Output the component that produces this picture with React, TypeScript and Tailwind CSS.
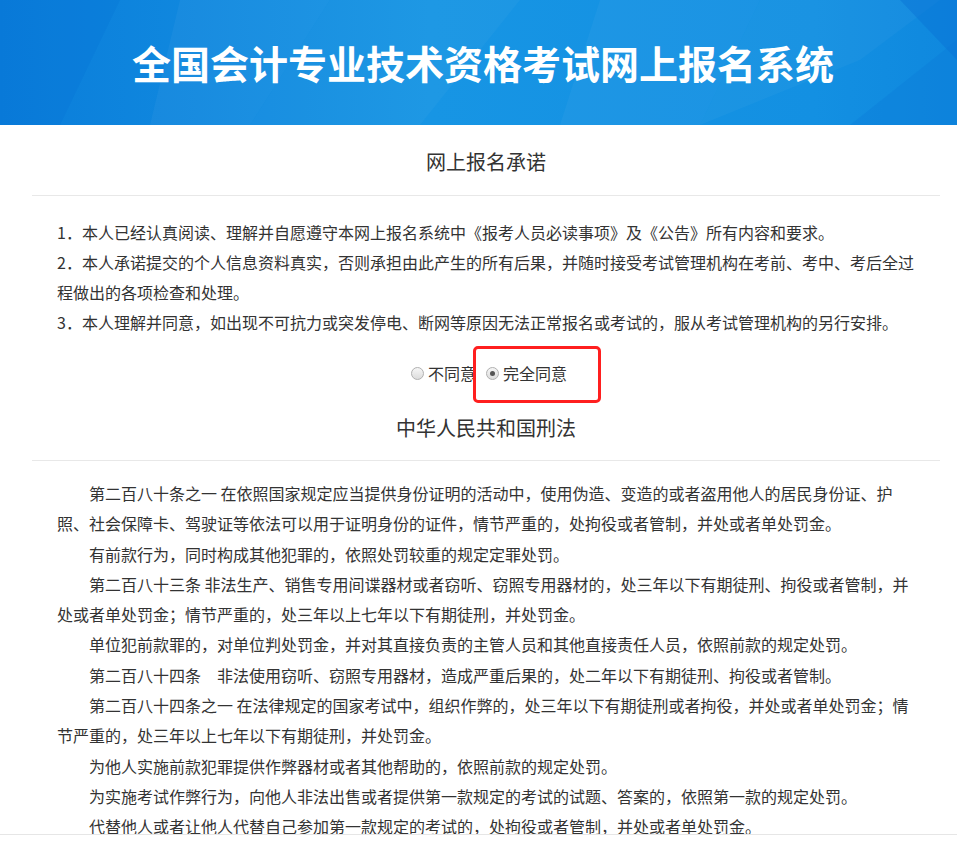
import React from "react";

const cjk = "font-['Microsoft_YaHei','Noto_Sans_CJK_SC',sans-serif]";

const promises = [
  "1．本人已经认真阅读、理解并自愿遵守本网上报名系统中《报考人员必读事项》及《公告》所有内容和要求。",
  "2．本人承诺提交的个人信息资料真实，否则承担由此产生的所有后果，并随时接受考试管理机构在考前、考中、考后全过程做出的各项检查和处理。",
  "3．本人理解并同意，如出现不可抗力或突发停电、断网等原因无法正常报名或考试的，服从考试管理机构的另行安排。",
];

const articles = [
  "第二百八十条之一 在依照国家规定应当提供身份证明的活动中，使用伪造、变造的或者盗用他人的居民身份证、护照、社会保障卡、驾驶证等依法可以用于证明身份的证件，情节严重的，处拘役或者管制，并处或者单处罚金。",
  "有前款行为，同时构成其他犯罪的，依照处罚较重的规定定罪处罚。",
  "第二百八十三条 非法生产、销售专用间谍器材或者窃听、窃照专用器材的，处三年以下有期徒刑、拘役或者管制，并处或者单处罚金；情节严重的，处三年以上七年以下有期徒刑，并处罚金。",
  "单位犯前款罪的，对单位判处罚金，并对其直接负责的主管人员和其他直接责任人员，依照前款的规定处罚。",
  "第二百八十四条　非法使用窃听、窃照专用器材，造成严重后果的，处二年以下有期徒刑、拘役或者管制。",
  "第二百八十四条之一 在法律规定的国家考试中，组织作弊的，处三年以下有期徒刑或者拘役，并处或者单处罚金；情节严重的，处三年以上七年以下有期徒刑，并处罚金。",
  "为他人实施前款犯罪提供作弊器材或者其他帮助的，依照前款的规定处罚。",
  "为实施考试作弊行为，向他人非法出售或者提供第一款规定的考试的试题、答案的，依照第一款的规定处罚。",
  "代替他人或者让他人代替自己参加第一款规定的考试的，处拘役或者管制，并处或者单处罚金。",
];

function HeaderBg() {
  return (
    <svg className="absolute inset-0 h-full w-full" viewBox="0 0 957 125" preserveAspectRatio="none">
      <defs>
        <linearGradient id="hb" x1="0" y1="0" x2="1" y2="0">
          <stop offset="0" stopColor="#0a7dda" />
          <stop offset="0.45" stopColor="#1795e4" />
          <stop offset="0.85" stopColor="#1390e2" />
          <stop offset="1" stopColor="#0f88de" />
        </linearGradient>
      </defs>
      <rect width="957" height="125" fill="url(#hb)" />
      <polygon points="0,0 120,0 60,125 0,125" fill="#0570d2" opacity="0.25" />
      <polygon points="180,0 330,0 250,125 150,125" fill="#ffffff" opacity="0.04" />
      <polygon points="330,0 520,0 420,125 250,125" fill="#ffffff" opacity="0.03" />
      <polygon points="600,0 760,0 700,125 560,125" fill="#ffffff" opacity="0.035" />
      <polygon points="760,0 940,0 860,60 700,125" fill="#ffffff" opacity="0.03" />
      <polygon points="900,0 957,0 957,60" fill="#0870d4" opacity="0.45" />
      <polygon points="850,125 957,40 957,125" fill="#0a78d8" opacity="0.3" />
    </svg>
  );
}

function Radio({ checked }: { checked?: boolean }) {
  return (
    <span className="inline-flex h-[13px] w-[13px] items-center justify-center rounded-full border border-[#b0b0b0] bg-gradient-to-b from-[#f6f6f6] to-[#dcdcdc]">
      {checked && <span className="h-[5px] w-[5px] rounded-full bg-[#555]" />}
    </span>
  );
}

export default function App() {
  return (
    <div className={`relative min-h-[848px] bg-white text-[#333] ${cjk}`}>
      <header className="relative flex h-[125px] items-center justify-center overflow-hidden pl-[9px]">
        <HeaderBg />
        <h1 className="relative text-[39px] font-bold text-white">全国会计专业技术资格考试网上报名系统</h1>
      </header>

      <main className="ml-[32px] w-[908px]">
        <div className="border-b border-[#e8e8e8] pt-[22px] pb-[18px] text-center text-[20px] leading-[30px]">网上报名承诺</div>

        <div className="mt-[21px] w-[885px] pl-[25px] text-[16px] leading-[30px]">
          {promises.map((p) => (
            <p key={p}>{p}</p>
          ))}
        </div>

        <div className="mt-[21px] flex h-[30px] items-center justify-center gap-[4px] pl-[6px] text-[16px]">
          <Radio />
          <span>不同意</span>
          <span className="w-[2px]" />
          <Radio checked />
          <span>完全同意</span>
        </div>

        <div className="mt-[25px] border-b border-[#e8e8e8] pb-[17px] text-center text-[20px] leading-[30px]">中华人民共和国刑法</div>

        <div className="mt-[17px] w-[885px] pl-[25px] text-[16px] leading-[30.3px]">
          {articles.map((a) => (
            <p key={a} className="indent-[32px]">{a}</p>
          ))}
        </div>
      </main>

      <div className="absolute left-[473px] top-[346px] h-[57px] w-[128px] rounded-[5px] border-[3px] border-[#ff1f1f]" />
      <div className="fixed left-0 right-0 top-[834px] h-[14px] border-t border-[#e6e6e6] bg-white" />
    </div>
  );
}
